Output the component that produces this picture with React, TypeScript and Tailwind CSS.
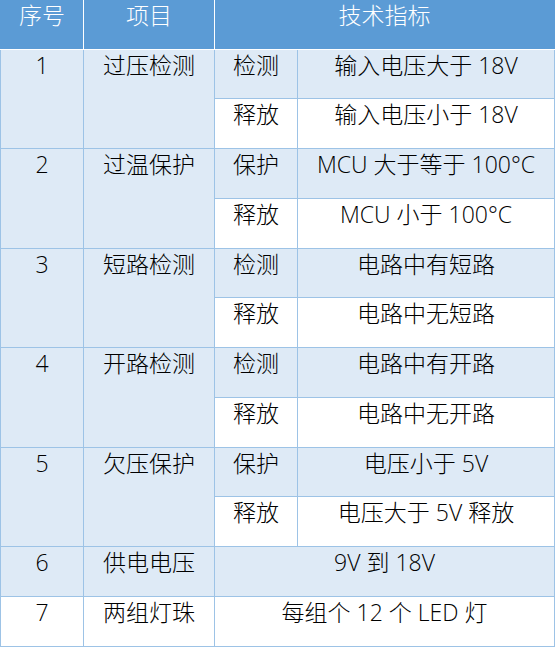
import React from 'react';

type Sub = { label: string; value: string };
type Item = { no: string; name: string; subs?: Sub[]; value?: string };

const items: Item[] = [
  { no: '1', name: '过压检测', subs: [{ label: '检测', value: '输入电压大于 18V' }, { label: '释放', value: '输入电压小于 18V' }] },
  { no: '2', name: '过温保护', subs: [{ label: '保护', value: 'MCU 大于等于 100°C' }, { label: '释放', value: 'MCU 小于 100°C' }] },
  { no: '3', name: '短路检测', subs: [{ label: '检测', value: '电路中有短路' }, { label: '释放', value: '电路中无短路' }] },
  { no: '4', name: '开路检测', subs: [{ label: '检测', value: '电路中有开路' }, { label: '释放', value: '电路中无开路' }] },
  { no: '5', name: '欠压保护', subs: [{ label: '保护', value: '电压小于 5V' }, { label: '释放', value: '电压大于 5V 释放' }] },
  { no: '6', name: '供电电压', value: '9V 到 18V' },
  { no: '7', name: '两组灯珠', value: '每组个 12 个 LED 灯' },
];

const cell = 'border border-[#9dc3e6] text-center align-top pt-[1px] leading-[28px] font-light';
const light = 'bg-[#deeaf6]';
const head = 'border-x border-white border-b border-b-white text-center align-top pt-0 leading-[30px] font-light text-white';

export default function App() {
  const rows: React.ReactNode[] = [];
  let idx = 0;
  items.forEach((it) => {
    const bg = idx % 2 === 0 ? light : 'bg-white';
    if (it.subs) {
      it.subs.forEach((s, i) => {
        const rowBg = (idx + i) % 2 === 0 ? light : 'bg-white';
        rows.push(
          <tr key={it.no + i} className="h-[49.75px]">
            {i === 0 && (
              <>
                <td rowSpan={2} className={`${cell} ${bg}`}>{it.no}</td>
                <td rowSpan={2} className={`${cell} ${bg}`}>{it.name}</td>
              </>
            )}
            <td className={`${cell} ${rowBg}`}>{s.label}</td>
            <td className={`${cell} ${rowBg}`}>{s.value}</td>
          </tr>
        );
      });
      idx += 2;
    } else {
      rows.push(
        <tr key={it.no} className="h-[49.75px]">
          <td className={`${cell} ${bg}`}>{it.no}</td>
          <td className={`${cell} ${bg}`}>{it.name}</td>
          <td colSpan={2} className={`${cell} ${bg}`}>{it.value}</td>
        </tr>
      );
      idx += 1;
    }
  });

  return (
    <div className="w-[555px] h-[648px] bg-white font-['Open_Sans','Noto_Sans_CJK_SC',sans-serif] text-[23px] text-black">
      <table className="w-[554px] border-collapse table-fixed">
        <colgroup>
          <col className="w-[83px]" />
          <col className="w-[131px]" />
          <col className="w-[83px]" />
          <col className="w-[257px]" />
        </colgroup>
        <thead>
          <tr className="h-[49px] bg-[#5b9bd5]">
            <th className={`${head} border-l-[#5b9bd5]`}>序号</th>
            <th className={head}>项目</th>
            <th colSpan={2} className={`${head} border-r-[#5b9bd5]`}>技术指标</th>
          </tr>
        </thead>
        <tbody>{rows}</tbody>
      </table>
    </div>
  );
}
